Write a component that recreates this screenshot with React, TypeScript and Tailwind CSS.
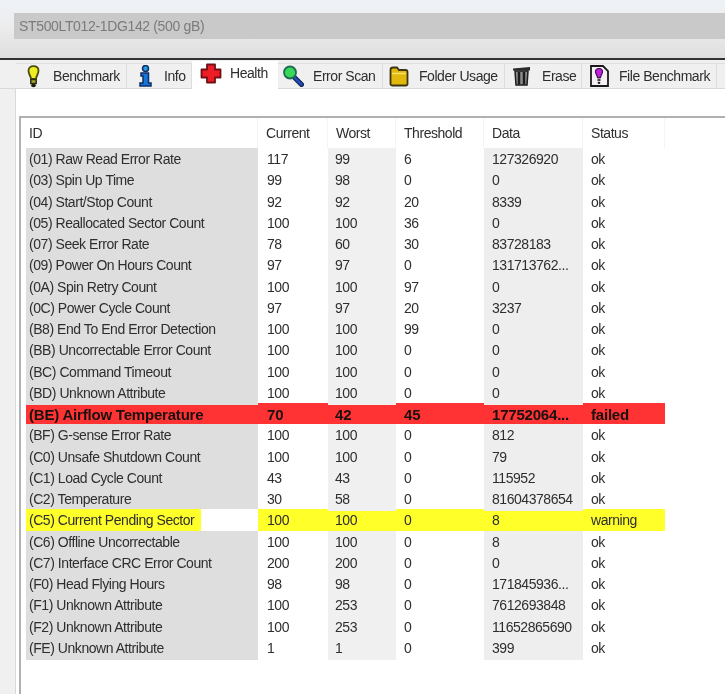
const rows = [
  ["(01) Raw Read Error Rate", "117", "99", "6", "127326920", "ok"],
  ["(03) Spin Up Time", "99", "98", "0", "0", "ok"],
  ["(04) Start/Stop Count", "92", "92", "20", "8339", "ok"],
  ["(05) Reallocated Sector Count", "100", "100", "36", "0", "ok"],
  ["(07) Seek Error Rate", "78", "60", "30", "83728183", "ok"],
  ["(09) Power On Hours Count", "97", "97", "0", "131713762...", "ok"],
  ["(0A) Spin Retry Count", "100", "100", "97", "0", "ok"],
  ["(0C) Power Cycle Count", "97", "97", "20", "3237", "ok"],
  ["(B8) End To End Error Detection", "100", "100", "99", "0", "ok"],
  ["(BB) Uncorrectable Error Count", "100", "100", "0", "0", "ok"],
  ["(BC) Command Timeout", "100", "100", "0", "0", "ok"],
  ["(BD) Unknown Attribute", "100", "100", "0", "0", "ok"],
  ["(BE) Airflow Temperature", "70", "42", "45", "17752064...", "failed"],
  ["(BF) G-sense Error Rate", "100", "100", "0", "812", "ok"],
  ["(C0) Unsafe Shutdown Count", "100", "100", "0", "79", "ok"],
  ["(C1) Load Cycle Count", "43", "43", "0", "115952", "ok"],
  ["(C2) Temperature", "30", "58", "0", "81604378654", "ok"],
  ["(C5) Current Pending Sector", "100", "100", "0", "8", "warning"],
  ["(C6) Offline Uncorrectable", "100", "100", "0", "8", "ok"],
  ["(C7) Interface CRC Error Count", "200", "200", "0", "0", "ok"],
  ["(F0) Head Flying Hours", "98", "98", "0", "171845936...", "ok"],
  ["(F1) Unknown Attribute", "100", "253", "0", "7612693848", "ok"],
  ["(F2) Unknown Attribute", "100", "253", "0", "11652865690", "ok"],
  ["(FE) Unknown Attribute", "1", "1", "0", "399", "ok"],
];

const gridCols = "grid grid-cols-[232px_70px_68px_88px_99px_82px]";

function BulbIcon() {
  return (
    <svg width="13" height="23" viewBox="0 0 13 23">
      <path d="M6.5 1.200C3.500 1.200 1.500 3 1.500 5.800c0 3 2 4.700 2.600 8.200h4.800c.6-3.500 2.600-5.200 2.600-8.200 0-2.800-2-4.600-5-4.600z" fill="#eeee22" stroke="#4c4c12" strokeWidth="1.800" />
      <path d="M3.800 14.500h5.400v4H3.800z" fill="#a8a82a" stroke="#2e2e10" strokeWidth="1.500" />
      <ellipse cx="6.500" cy="20.500" rx="2.400" ry="1.800" fill="#1c1c10" />
    </svg>
  );
}

function InfoIcon() {
  return (
    <svg width="13" height="22" viewBox="0 0 13 22">
      <circle cx="6.500" cy="3.500" r="3" fill="#1f9fe0" stroke="#0e2c66" strokeWidth="1.500" />
      <path d="M2 8h7.500v10H12v3H1v-3h3v-7H2z" fill="#1576d8" stroke="#0e2c66" strokeWidth="1.500" />
    </svg>
  );
}

function CrossIcon() {
  return (
    <svg width="22" height="21" viewBox="0 0 22 21">
      <path d="M7 1.500h8v5h5.500v8H15v5H7v-5H1.500v-8H7z" fill="#ee1c24" stroke="#701014" strokeWidth="1.800" strokeLinejoin="round" />
    </svg>
  );
}

function LensIcon() {
  return (
    <svg width="22" height="22" viewBox="0 0 22 22">
      <path d="M12 12l7.500 7.500" stroke="#0f1f55" strokeWidth="5" strokeLinecap="round" />
      <path d="M12 12l7.500 7.500" stroke="#2350b8" strokeWidth="2.500" strokeLinecap="round" />
      <circle cx="8" cy="7.500" r="6" fill="#35d858" stroke="#1f6a55" strokeWidth="1.800" />
    </svg>
  );
}

function FolderIcon() {
  return (
    <svg width="20" height="21" viewBox="0 0 20 21">
      <path d="M1.500 4c0-1.700 1-2.500 2.500-2.500h4L10 4h6.500c1.200 0 2 .8 2 2v12c0 1-.8 1.500-2 1.500h-13c-1.200 0-2-.5-2-1.500z" fill="#e2b80c" stroke="#3d3410" strokeWidth="1.800" />
      <path d="M3 7.500h14" stroke="#f5e26a" strokeWidth="1.500" />
    </svg>
  );
}

function TrashIcon() {
  return (
    <svg width="19" height="20" viewBox="0 0 19 20">
      <path d="M1 2.500l17-1.500v3.500H1z" fill="#2a2a2a" />
      <path d="M3 5h13l-1 14H4z" fill="#8c8c8c" stroke="#1e1e1e" strokeWidth="1.500" />
      <path d="M7 6v12.500M12 6v12.500" stroke="#1e1e1e" strokeWidth="2.500" />
    </svg>
  );
}

function FileBenchIcon() {
  return (
    <svg width="19" height="22" viewBox="0 0 19 22">
      <path d="M1 1h12l5 5v15H1z" fill="#f4f0f4" stroke="#1a1a1a" strokeWidth="1.800" />
      <path d="M9 3.500c-2.300 0-3.500 1.600-3.500 3.300 0 2 1.700 3.200 2 5.700h3c.3-2.500 2-3.700 2-5.700 0-1.700-1.200-3.300-3.500-3.300z" fill="#c41ee0" stroke="#3c0e50" strokeWidth="1.200" />
      <rect x="7.500" y="13.500" width="3" height="2.500" fill="#444" />
      <rect x="7.800" y="16.800" width="2.400" height="2" fill="#1a1a1a" />
    </svg>
  );
}

const tabs = [
  { label: "Benchmark", icon: <BulbIcon />, width: "w-[111px]", iconBox: "w-[34px]", gap: "ml-[3px]" },
  { label: "Info", icon: <InfoIcon />, width: "w-[65px]", iconBox: "w-[36px]", gap: "ml-px" },
  { label: "Health", icon: <CrossIcon />, width: "w-[86px]", iconBox: "w-[38px]", gap: "ml-0", active: true },
  { label: "Error Scan", icon: <LensIcon />, width: "w-[105px]", iconBox: "w-[30px]", gap: "ml-[5px]" },
  { label: "Folder Usage", icon: <FolderIcon />, width: "w-[122px]", iconBox: "w-[32px]", gap: "ml-1" },
  { label: "Erase", icon: <TrashIcon />, width: "w-[77px]", iconBox: "w-[32px]", gap: "ml-[5px]" },
  { label: "File Benchmark", icon: <FileBenchIcon />, width: "w-[135px]", iconBox: "w-[34px]", gap: "ml-[3px]" },
];

export default function App() {
  return (
    <div className="w-[725px] h-[694px] overflow-hidden blur-[0.3px] bg-[#f0f0f0] text-[14px] tracking-[-0.45px] text-[#2e2e2e] font-['Liberation_Sans',Arial,sans-serif]">
      {/* drive selector */}
      <div className="h-[58px] pt-[13px] pl-[14px] bg-gradient-to-b from-[#eef2f7] via-[#ececec] to-[#dedede]">
        <div className="h-[26px] bg-[#c9c9c9] pl-[5px] leading-[26px] tracking-[-0.35px] text-[#7b7b7b]">ST500LT012-1DG142 (500 gB)</div>
      </div>
      <div className="h-[2px] bg-[#333333]" />

      {/* tabs */}
      <div className="flex items-end h-[29px] pl-[16px] border-b border-[#d9d9d9]">
        {tabs.map((tab) => (
          <div
            key={tab.label}
            className={`${tab.width} shrink-0 flex items-center ${
              tab.active
                ? "h-[28px] bg-white pb-[3px] -mb-px"
                : "h-[25px] bg-[#f0f0f0] border-r border-t border-[#dedede]"
            }`}
          >
            <div className={`${tab.iconBox} shrink-0 flex justify-center`}>{tab.icon}</div>
            <span className={tab.gap}>{tab.label}</span>
          </div>
        ))}
        <div className="flex-1 h-[25px] border-t border-[#dedede]" />
      </div>

      {/* health panel */}
      <div className="ml-[15px] h-[605px] bg-white border-l border-[#d9d9d9] pt-[27px] pl-[3px]">
        <div className="h-full border-l-2 border-t-2 border-[#b0b0b0] pl-[5px]">
          <div className={`${gridCols} h-[30px] items-center`}>
            {["ID", "Current", "Worst", "Threshold", "Data", "Status"].map((head, i) => (
              <div
                key={head}
                className={`h-full leading-[30px] border-r border-[#f4f4f4] ${i === 0 ? "pl-[3px]" : "pl-2"}`}
              >
                {head}
              </div>
            ))}
          </div>
          {rows.map((row) => {
            const failed = row[5] === "failed";
            const warning = row[5] === "warning";
            const shade = (cls: string) => (failed || warning ? "" : cls);
            return (
              <div
                key={row[0]}
                className={`${gridCols} h-[21.25px] leading-[23px] w-[639px] ${
                  failed
                    ? "bg-[#ff3333] font-bold text-[15px] tracking-[-0.2px] text-[#1a1010]"
                    : warning
                      ? "bg-[#ffff2a]"
                      : ""
                }`}
              >
                <div className={`pl-[3px] ${shade("bg-[#dedede]")} ${warning ? "bg-white" : ""}`}>
                  {warning ? <span className="block w-[175px] h-[21.25px] -ml-[3px] pl-[3px] bg-[#ffff2a]">{row[0]}</span> : row[0]}
                </div>
                <div className="pl-[9px]">{row[1]}</div>
                <div className={`pl-[7px] ${shade("bg-[#f0f0f0]")}`}>{row[2]}</div>
                <div className="pl-2">{row[3]}</div>
                <div className={`pl-2 ${shade("bg-[#eeeeee]")}`}>{row[4]}</div>
                <div className="pl-2">{row[5]}</div>
              </div>
            );
          })}
        </div>
      </div>
    </div>
  );
}
